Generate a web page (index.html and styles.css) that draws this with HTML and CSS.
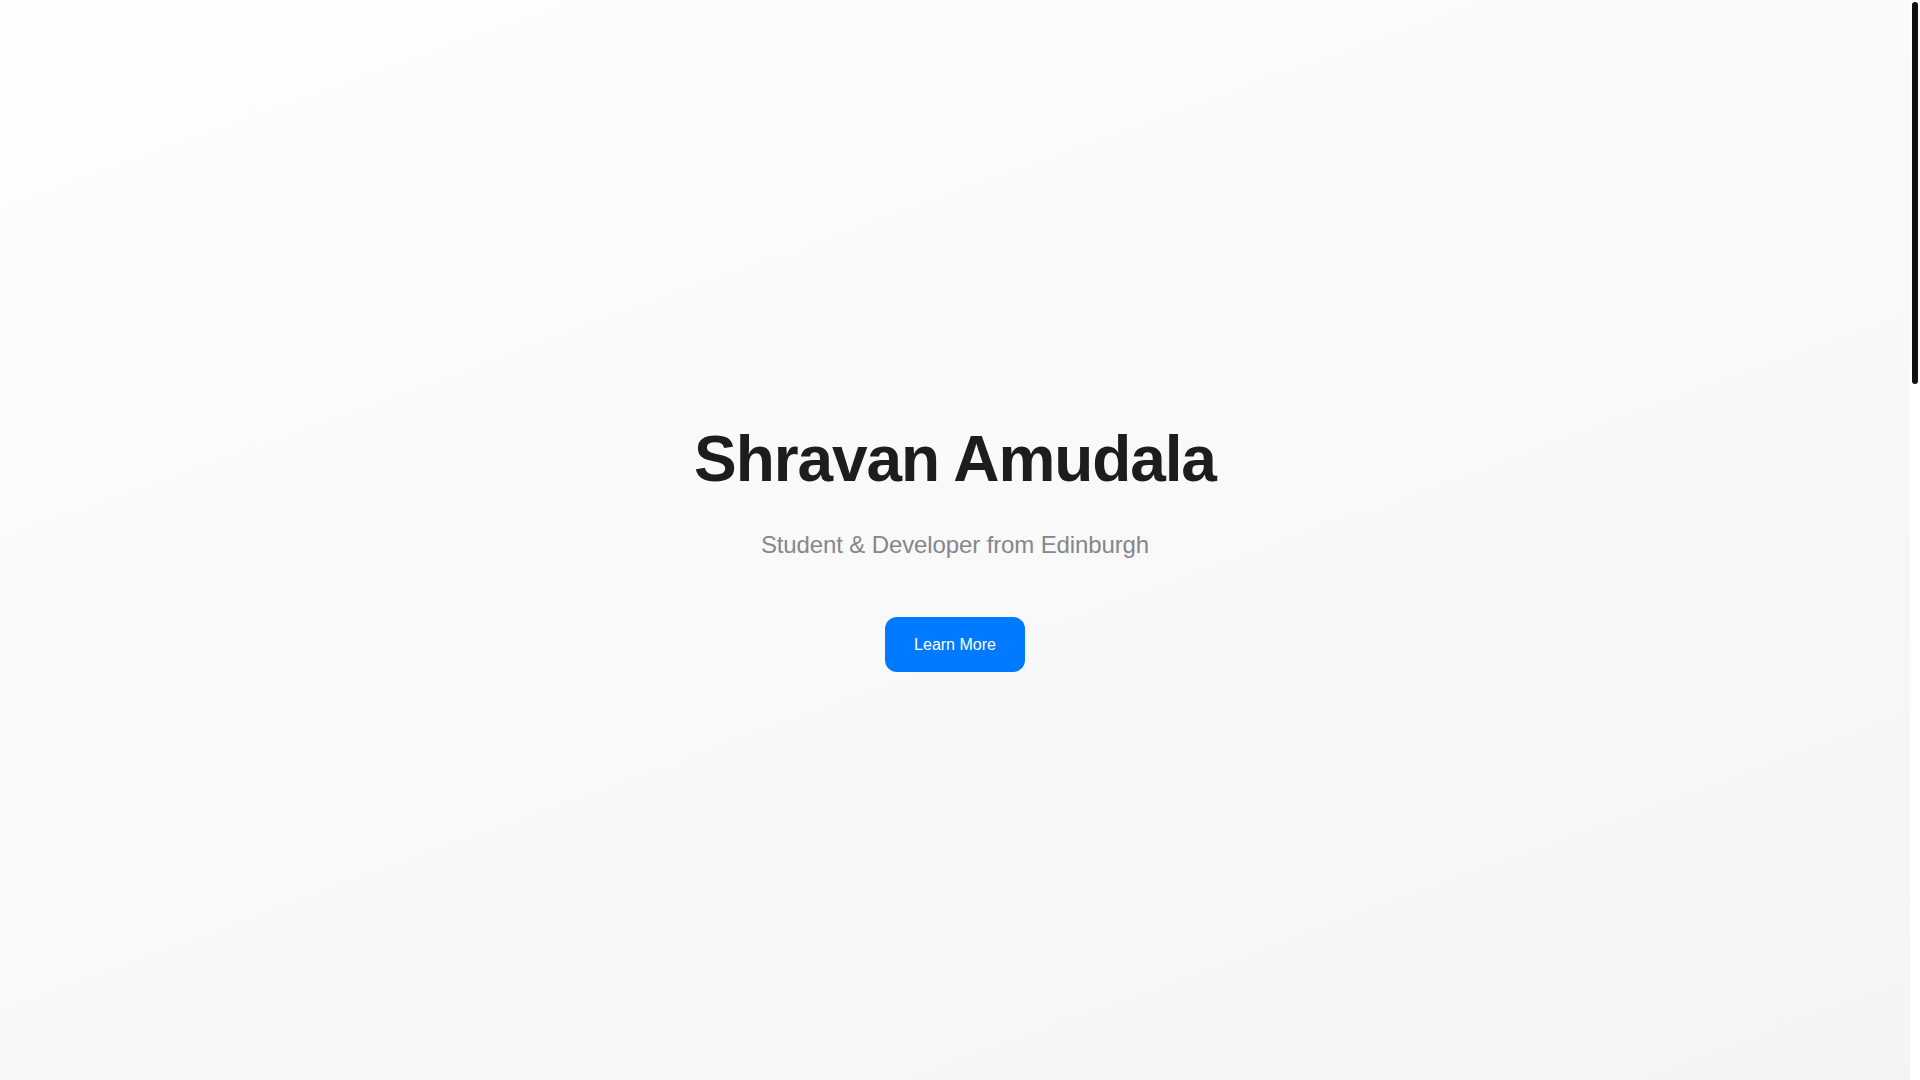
FILE: index.html
```html
<!DOCTYPE html>
<html lang="en">
<head>
<meta charset="utf-8">
<title>Shravan Amudala</title>
<link rel="stylesheet" href="styles.css">
</head>
<body>
<div class="viewport">
  <main class="page">
    <section class="hero">
      <div class="hero-content">
        <h1 class="hero-title">Shravan Amudala</h1>
        <p class="hero-subtitle">Student &amp; Developer from Edinburgh</p>
        <a class="hero-button" href="#about">Learn More</a>
      </div>
    </section>
  </main>
  <div class="scrollbar" aria-hidden="true">
    <div class="scrollbar-thumb"></div>
  </div>
</div>
</body>
</html>
```

FILE: styles.css
```css
* {
  box-sizing: border-box;
}
html,
body {
  margin: 0;
  height: 100%;
  overflow: hidden;
}
body {
  font-family: "Liberation Sans", Arial, sans-serif;
  background: #ffffff;
  color: #1d1d1f;
}
.viewport {
  display: flex;
  height: 100vh;
}
.page {
  flex: 1;
  min-width: 0;
  height: 100%;
}
.scrollbar {
  width: 10px;
  flex: none;
  background: #ffffff;
  padding: 2px;
}
.scrollbar-thumb {
  width: 6px;
  height: 382px;
  background: #111111;
  border-radius: 3px;
}
.hero {
  height: 100%;
  padding-top: 13px;
  display: flex;
  align-items: center;
  justify-content: center;
  background: linear-gradient(160deg, #fdfdfd 0%, #f9f9fa 50%, #f4f4f6 100%);
}
.hero-content {
  display: flex;
  flex-direction: column;
  align-items: center;
  text-align: center;
}
.hero-title {
  margin: 0;
  font-size: 64px;
  line-height: 1.2;
  font-weight: 700;
  letter-spacing: -1.1px;
  color: #1d1d1f;
}
.hero-subtitle {
  margin: 29px 0 0;
  font-size: 24px;
  line-height: 1.5;
  color: #86868b;
  letter-spacing: -0.005em;
}
.hero-button {
  margin-top: 54px;
  display: inline-block;
  padding: 18px 29.5px;
  font-size: 16px;
  line-height: 19px;
  color: #ffffff;
  background: #007aff;
  border-radius: 12px;
  text-decoration: none;
}
```
